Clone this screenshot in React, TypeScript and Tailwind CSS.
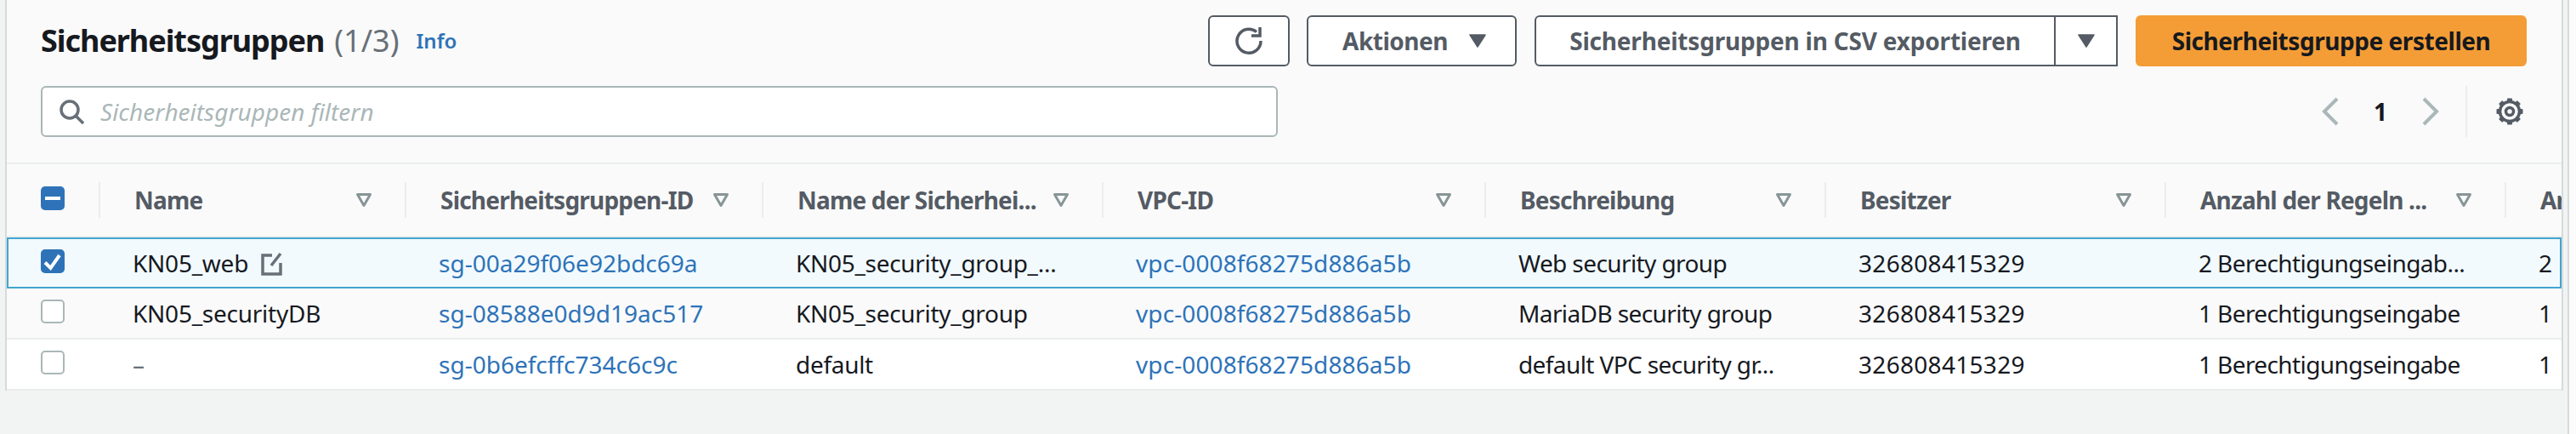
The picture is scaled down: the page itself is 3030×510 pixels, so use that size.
import React from "react";

const W = [110, 360, 420, 400, 450, 400, 400, 400];

function Sort() {
  return (
    <svg width="20" height="18" viewBox="0 0 20 18" className="shrink-0">
      <path d="M2.5 2.5h15L10 15.5z" fill="none" stroke="#879596" strokeWidth="3" strokeLinejoin="round" />
    </svg>
  );
}

function Caret() {
  return (
    <svg width="20" height="16" viewBox="0 0 20 16" className="shrink-0">
      <path d="M1 1h18L10 15z" fill="#545b64" stroke="#545b64" strokeWidth="1.5" strokeLinejoin="round" />
    </svg>
  );
}

function Box({ state }: { state: "on" | "off" | "mixed" }) {
  if (state === "off")
    return <div className="h-7 w-7 rounded-[5px] border-2 border-[#aab7b8] bg-white" />;
  return (
    <div className="flex h-7 w-7 items-center justify-center rounded-[5px] bg-[#2e73b8]">
      {state === "on" ? (
        <svg width="28" height="28" viewBox="0 0 28 28">
          <path d="M5 15.5l6.5 6.5L22 7" fill="none" stroke="#fff" strokeWidth="4" />
        </svg>
      ) : (
        <div className="h-1 w-[18px] bg-white" />
      )}
    </div>
  );
}

function Gear() {
  return (
    <svg width="34" height="34" viewBox="0 0 34 34" fill="none" stroke="#545b64">
      <circle cx="17" cy="17" r="11.5" strokeWidth="3.5" />
      <circle cx="17" cy="17" r="4.5" strokeWidth="3.5" />
      {[0, 45, 90, 135, 180, 225, 270, 315].map((a) => (
        <rect key={a} x="14" y="1.5" width="6" height="5" rx="1" fill="#545b64" stroke="none" transform={`rotate(${a} 17 17)`} />
      ))}
    </svg>
  );
}

const heads = [
  "Name",
  "Sicherheitsgruppen-ID",
  "Name der Sicherhei...",
  "VPC-ID",
  "Beschreibung",
  "Besitzer",
  "Anzahl der Regeln ...",
];

const rows = [
  {
    name: "KN05_web",
    id: "sg-00a29f06e92bdc69a",
    gn: "KN05_security_group_...",
    d: "Web security group",
    r: "2 Berechtigungseingab...",
    n: "2",
    cls: "shadow-[inset_0_0_0_2px_#44a5cf] bg-[#f2fafe]",
    box: "on" as const,
  },
  {
    name: "KN05_securityDB",
    id: "sg-08588e0d9d19ac517",
    gn: "KN05_security_group",
    d: "MariaDB security group",
    r: "1 Berechtigungseingabe",
    n: "1",
    cls: "border-b-2 border-[#eaeded] bg-[#fafafa]",
    box: "off" as const,
  },
  {
    name: "–",
    id: "sg-0b6efcffc734c6c9c",
    gn: "default",
    d: "default VPC security gr...",
    r: "1 Berechtigungseingabe",
    n: "1",
    cls: "border-b-2 border-[#eaeded] bg-white",
    box: "off" as const,
  },
];

export default function App() {
  return (
    <div className="flex h-[510px] w-[3030px] overflow-hidden bg-[#f2f3f3] font-['Noto_Sans',sans-serif] text-[28px] text-[#16191f]">
      <div className="ml-[6px] h-[459px] w-[3009px] shrink-0 overflow-hidden border-x-2 border-[#d5dbdb] bg-[#fafafa]">
        <div className="flex h-[193px] flex-col border-b-2 border-[#eaeded]">
          <div className="flex h-[101px] items-start pl-10 pt-[18px]">
            <div className="flex h-[60px] w-[1373px] items-center">
              <span className="text-[36px] font-bold leading-none tracking-[-1.05px]">Sicherheitsgruppen</span>
              <span className="ml-3 text-[36px] leading-none text-[#687078]">(1/3)</span>
              <span className="ml-5 text-[24px] font-semibold text-[#2e73b8]">Info</span>
            </div>
            <button className="flex h-[60px] w-[96px] items-center justify-center rounded-md border-2 border-[#545b64] bg-white">
              <svg width="36" height="36" viewBox="0 0 36 36" fill="none" stroke="#545b64" strokeWidth="3.5">
                <path d="M27 7.5A14 14 0 1 0 32 18" />
                <path d="M31 2v10H21" />
              </svg>
            </button>
            <button className="ml-5 flex h-[60px] w-[247px] items-center gap-[25px] rounded-md border-2 border-[#545b64] bg-white pl-10 font-bold tracking-[-0.5px] text-[#545b64]">
              Aktionen
              <Caret />
            </button>
            <div className="ml-[21px] flex h-[60px] w-[686px] rounded-l-md border-2 border-[#545b64] bg-white font-bold tracking-[-0.2px] text-[#545b64]">
              <div className="flex w-[611px] items-center justify-center whitespace-nowrap border-r-2 border-[#545b64]">
                Sicherheitsgruppen in CSV exportieren
              </div>
              <div className="flex flex-1 items-center justify-center">
                <Caret />
              </div>
            </div>
            <button className="ml-[21px] flex h-[60px] w-[460px] items-center justify-center rounded-md bg-[#f49d36] font-bold tracking-[-0.45px]">
              Sicherheitsgruppe erstellen
            </button>
          </div>
          <div className="flex h-[60px] items-center pl-10">
            <div className="flex h-[60px] w-[1455px] items-center gap-[19px] rounded-md border-2 border-[#aab7b8] bg-white pl-5">
              <svg width="29" height="29" viewBox="0 0 29 29" fill="none" stroke="#687078" strokeWidth="3.5">
                <circle cx="12" cy="12" r="10" />
                <path d="M19 19l9 9" />
              </svg>
              <span className="italic text-[#aab7b8]">Sicherheitsgruppen filtern</span>
            </div>
            <div className="ml-auto flex h-[60px] items-center">
              <svg width="20" height="34" viewBox="0 0 20 34" fill="none" stroke="#aab7b8" strokeWidth="4">
                <path d="M18 2L3 17l15 15" />
              </svg>
              <span className="mx-[41px] font-bold">1</span>
              <svg width="20" height="34" viewBox="0 0 20 34" fill="none" stroke="#aab7b8" strokeWidth="4">
                <path d="M2 2l15 15L2 32" />
              </svg>
              <div className="ml-[31px] h-[60px] w-0.5 bg-[#eaeded]" />
              <div className="ml-[33px] mr-[44px]">
                <Gear />
              </div>
            </div>
          </div>
        </div>
        <div className="flex h-[86px] items-start border-b-2 border-[#eaeded] pt-[21px]">
          <div className="flex h-[42px] w-[110px] shrink-0 items-center border-r-2 border-[#eaeded] pb-1 pl-10">
            <Box state="mixed" />
          </div>
          {heads.map((h, i) => (
            <div key={h} className="flex h-[42px] shrink-0 items-center justify-between border-r-2 border-[#eaeded] pl-10 pr-[38px] font-bold tracking-[-0.8px] text-[#545b64]" style={{ width: W[i + 1] }}>
              <span className="whitespace-nowrap">{h}</span>
              <Sort />
            </div>
          ))}
          <div className="pl-10 font-bold tracking-[-0.8px] text-[#545b64]">Anzahl</div>
        </div>
        {rows.map((r) => (
          <div key={r.id} className={`flex h-[60px] items-center overflow-hidden ${r.cls}`}>
            <div className="w-[108px] shrink-0 pb-1 pl-10">
              <Box state={r.box} />
            </div>
            <div className="flex shrink-0 items-center gap-[15px] pl-10 tracking-[-0.25px]" style={{ width: W[1] }}>
              <span className={r.name === "–" ? "text-[#687078]" : ""}>{r.name}</span>
              {r.box === "on" && (
                <svg width="25" height="29" viewBox="0 0 25 29" fill="none" stroke="#687078" strokeWidth="3.5">
                  <path d="M13 5H2v22h21V14" />
                  <path d="M23 3L12 17" />
                </svg>
              )}
            </div>
            <div className="shrink-0 pl-10 text-[#2e73b8]" style={{ width: W[2] }}>{r.id}</div>
            <div className="shrink-0 whitespace-nowrap pl-10 tracking-[-0.3px]" style={{ width: W[3] }}>{r.gn}</div>
            <div className="shrink-0 pl-10 tracking-[0.1px] text-[#2e73b8]" style={{ width: W[4] }}>vpc-0008f68275d886a5b</div>
            <div className="shrink-0 whitespace-nowrap pl-10 tracking-[-0.6px]" style={{ width: W[5] }}>{r.d}</div>
            <div className="shrink-0 pl-10 tracking-[0.3px]" style={{ width: W[6] }}>326808415329</div>
            <div className="shrink-0 whitespace-nowrap pl-10 tracking-[-0.6px]" style={{ width: W[7] }}>{r.r}</div>
            <div className="shrink-0 pl-10">{r.n}</div>
          </div>
        ))}
      </div>
      <div className="ml-[5px] h-full w-0.5 shrink-0 bg-[#d5dbdb]" />
      <div className="h-full flex-1 bg-[#fbfbfb]" />
    </div>
  );
}
